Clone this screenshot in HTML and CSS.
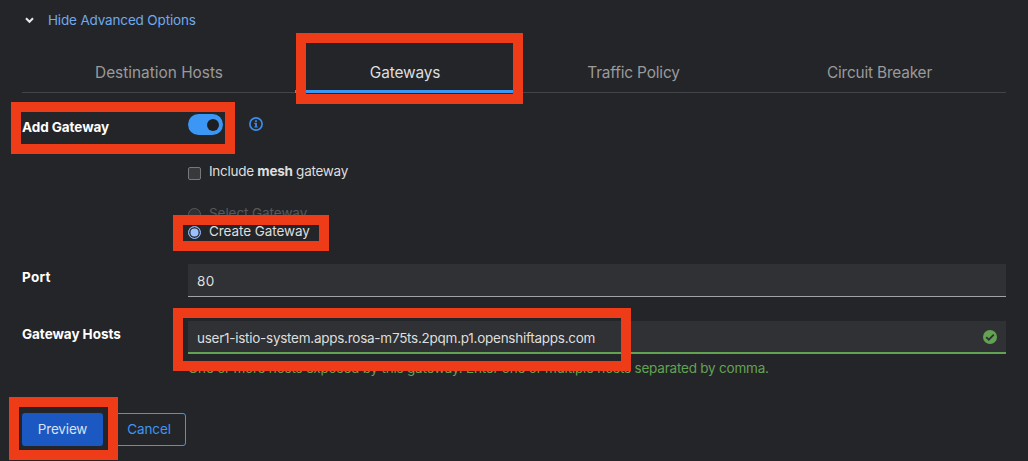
FILE: index.html
```html
<!DOCTYPE html>
<html lang="en">
<head>
<meta charset="utf-8">
<title>Gateways</title>
<link rel="stylesheet" href="styles.css">
</head>
<body>
<main class="wizard">
  <div class="expand">
    <svg class="chevron" width="9" height="7" viewBox="0 0 9 7"><path d="M1 1.3 4.5 4.8 8 1.3" fill="none" stroke="#e8e8e8" stroke-width="2.1"/></svg>
    <a class="expand-link">Hide Advanced Options</a>
  </div>
  <nav class="tabs">
    <div class="tab"><span class="tab-hosts">Destination Hosts</span></div>
    <div class="tab active"><span class="tab-gateways">Gateways</span></div>
    <div class="tab"><span class="tab-traffic">Traffic Policy</span></div>
    <div class="tab"><span class="tab-circuit">Circuit Breaker</span></div>
  </nav>
  <section class="row row-add">
    <div class="label label-add">Add Gateway</div>
    <div class="switch-line">
      <span class="switch"><span class="knob"></span></span>
      <svg class="info" width="14" height="14" viewBox="0 0 14 14"><circle cx="7" cy="7" r="6.1" fill="none" stroke="#3a8ceb" stroke-width="1.7"/><path d="M6.1 3.2h1.8v1.7H6.1zM5.3 5.8h2.6v3.6h.8v1.2H5.3V9.4h.8V7h-.8z" fill="#3a8ceb"/></svg>
    </div>
  </section>
  <div class="options">
    <div class="option option-mesh"><span class="checkbox"></span><span class="mesh-text">Include <b>mesh</b> gateway</span></div>
    <div class="option option-select"><span class="radio off"></span><span>Select Gateway</span></div>
    <div class="option option-create"><span class="radio on"></span><span>Create Gateway</span></div>
  </div>
  <section class="row row-port">
    <div class="label label-port">Port</div>
    <div class="input port-value">80</div>
  </section>
  <section class="row row-hosts">
    <div class="label label-hosts">Gateway Hosts</div>
    <div class="field">
      <div class="input valid"><span class="host-value">user1-istio-system.apps.rosa-m75ts.2pqm.p1.openshiftapps.com</span>
        <svg class="check" width="14" height="14" viewBox="0 0 14 14"><circle cx="7" cy="7" r="7" fill="#62a352"/><path d="m3.2 7.2 2.6 2.5 5-5" fill="none" stroke="#2f3034" stroke-width="1.8"/></svg>
      </div>
      <div class="help">One or more hosts exposed by this gateway. Enter one or multiple hosts separated by comma.</div>
    </div>
  </section>
  <footer class="actions">
    <div class="btn primary">Preview</div>
    <div class="btn secondary">Cancel</div>
  </footer>
  <div class="mark mark-tab"></div>
  <div class="mark mark-switch"></div>
  <div class="mark mark-create"></div>
  <div class="mark mark-host"></div>
  <div class="mark mark-preview"></div>
</main>
</body>
</html>
```
FILE: styles.css
```css
* { box-sizing: border-box; }
body {
  margin: 0;
  background: #242529;
  color: #dedede;
  font: 13.5px/20px Inter, "Noto Sans", sans-serif;
}
.wizard {
  position: relative;
  width: 1028px;
  height: 461px;
  padding: 10px 22px 0;
  overflow: hidden;
  white-space: nowrap;
}
.expand { display: flex; align-items: center; height: 20px; padding-left: 3px; }
.chevron { margin: 1px 14px 0 0; }
.expand-link { color: #6fa9ee; letter-spacing: -0.16px; }
.tabs {
  display: grid;
  grid-template-columns: 273px 219px 238px 254px;
  height: 63px;
  border-bottom: 1px solid #434448;
}
.tab {
  display: flex;
  justify-content: center;
  padding: 33px 0 0 1px;
  height: 62px;
  font-size: 15.4px;
  color: #9a9a9b;
}
.tab.active { color: #dedede; height: 63px; border-bottom: 3px solid #3b97f3; }
.tab-gateways { letter-spacing: -0.15px; }
.tab-traffic { letter-spacing: -0.16px; }
.tab-circuit { letter-spacing: -0.18px; }
.row { display: grid; grid-template-columns: 166px 818px; }
.label { font-weight: 700; color: #fff; }
.row-add { height: 68px; padding-top: 21px; }
.label-add { padding-top: 3px; letter-spacing: -0.06px; }
.switch-line { display: flex; align-items: flex-start; }
.switch { width: 35px; height: 21px; border-radius: 11px; background: #3b97f3; padding: 5px 0 0 19px; }
.knob { display: block; width: 12px; height: 12px; border-radius: 50%; background: #1e1f22; }
.info { margin: 3px 0 0 26px; }
.options { padding-left: 166px; height: 103px; }
.option { display: flex; height: 20px; letter-spacing: -0.07px; }
.option-mesh { margin-bottom: 22px; }
.mesh-text { letter-spacing: -0.27px; }
.option-select { height: 18px; color: #58595b; }
.checkbox, .radio { width: 13px; height: 13px; margin: 5px 8px 0 0; border: 1px solid #77787a; background: #38393a; flex: none; }
.checkbox { margin-top: 6px; border-radius: 2px; }
.radio { border-radius: 50%; }
.radio.off { border-color: #58595b; background: #303134; }
.radio.on { border-color: #8db4f5; background: #9cc1ff; box-shadow: inset 0 0 0 1.5px #303134; }
.input {
  display: flex;
  align-items: center;
  height: 33px;
  padding: 2px 9px 0;
  background: #303134;
  border-bottom: 1px solid #a2a3a5;
}
.port-value { letter-spacing: 0.3px; }
.row-port { height: 57px; }
.label-port, .label-hosts { padding-top: 3px; }
.label-port { letter-spacing: 0.3px; }
.label-hosts { letter-spacing: -0.05px; }
.input.valid { justify-content: space-between; padding-top: 3px; border-bottom: 2px solid #62a352; }
.host-value { letter-spacing: -0.26px; }
.check { margin-bottom: 2px; }
.row-hosts { height: 92px; }
.help { margin-top: 4px; color: #62a352; letter-spacing: -0.21px; }
.actions { display: flex; gap: 8px; }
.btn { width: 81px; height: 33px; border-radius: 3px; line-height: 33px; text-align: center; }
.primary { background: #1b58c2; color: #d9e1f0; letter-spacing: -0.15px; }
.secondary { width: 75px; padding-left: 1px; line-height: 31px; border: 1px solid #3b97f3; color: #3b97f3; letter-spacing: -0.1px; }
.mark { position: absolute; border: 10px solid #ed3c17; }
.mark-tab { left: 296px; top: 33px; width: 227px; height: 71px; }
.mark-switch { left: 11px; top: 102px; width: 224px; height: 52px; }
.mark-create { left: 173px; top: 215px; width: 156px; height: 36px; }
.mark-host { left: 173px; top: 308px; width: 458px; height: 63px; }
.mark-preview { left: 9px; top: 397px; width: 109px; height: 63px; }
```
